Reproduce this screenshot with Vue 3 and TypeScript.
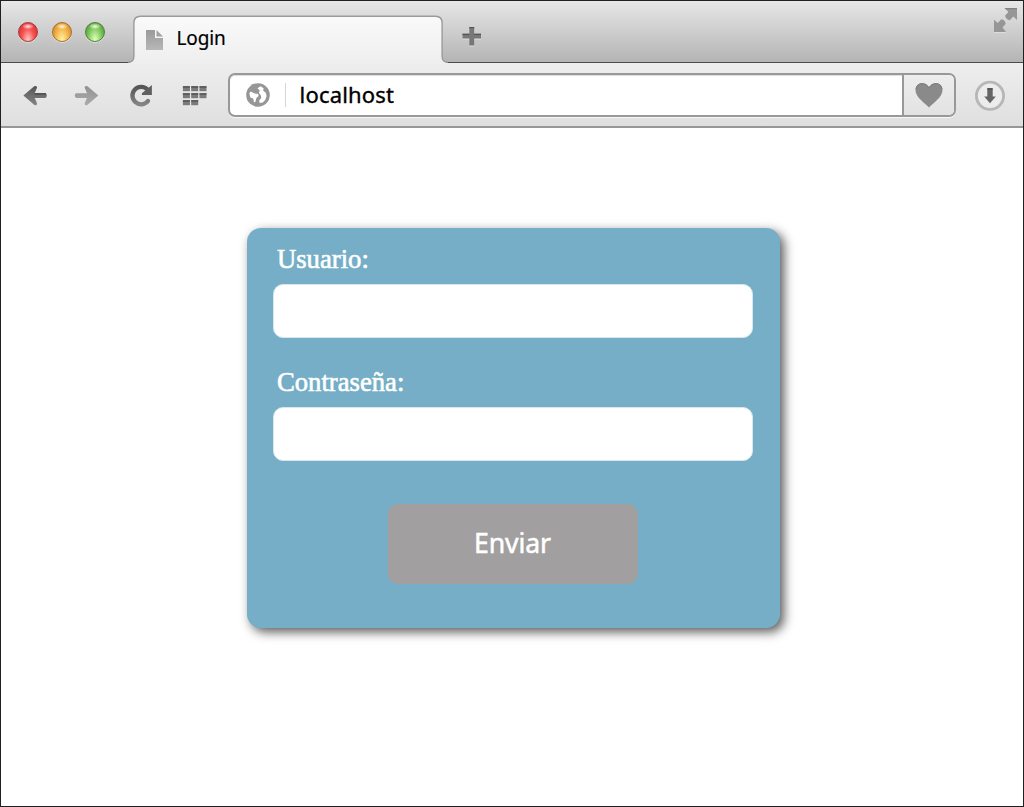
<script setup lang="ts">
import { ref } from 'vue'

const title = 'Login'
const address = ref('localhost')
const user = ref('')
const password = ref('')
const lights = ['red', 'amber', 'green']
const tiles = [
  [0, 0], [8.3, 0], [16.6, 0],
  [0, 7], [8.3, 7], [16.6, 7],
  [0, 14], [8.3, 14],
]
</script>

<template>
  <div class="window">
    <header class="titlebar">
      <div class="lights">
        <span v-for="c in lights" :key="c" class="light" :class="c"></span>
      </div>
      <div class="tab">
        <svg class="tab-shape" width="320" height="50" viewBox="0 0 320 50">
          <defs>
            <linearGradient id="tabFill" x1="0" y1="0" x2="0" y2="1">
              <stop offset="0" stop-color="#fafafa" />
              <stop offset="1" stop-color="#eeeeee" />
            </linearGradient>
          </defs>
          <path d="M1.5 50V48.3Q6 47.5 6 42.5V9Q6 2.5 12.5 2.5H307.5Q314 2.5 314 9V42.5Q314 47.5 318.5 48.3V50Z" fill="url(#tabFill)" />
          <path d="M0 48.3Q5.9 48.3 5.9 42.5V9Q5.9 2.3 12.5 2.3H307.5Q314.1 2.3 314.1 9V42.5Q314.1 48.3 320 48.3" fill="none" stroke="#9b9b9b" stroke-width="1.4" />
        </svg>
        <svg class="page-icon" width="18" height="21" viewBox="0 0 18 21">
          <defs>
            <linearGradient id="pageFill" x1="0" y1="0" x2="0" y2="1">
              <stop offset="0" stop-color="#9a9a9a" />
              <stop offset="1" stop-color="#b8b8b8" />
            </linearGradient>
          </defs>
          <path d="M0 0H9V8H17V20H0Z" fill="url(#pageFill)" />
          <path d="M10.5 0L17 6.5H10.5Z" fill="#a2a2a2" />
        </svg>
        <span class="tab-title">{{ title }}</span>
      </div>
      <svg class="plus" width="20" height="21" viewBox="0 0 20 21">
        <path d="M7.3 1H12.2V7.8H19V12.6H12.2V19.5H7.3V12.6H.5V7.8H7.3Z" fill="#dedede" />
        <path d="M7.3 0H12.2V6.8H19V11.6H12.2V18.5H7.3V11.6H.5V6.8H7.3Z" fill="#777" />
        <path d="M7.3 .6H12.2M.5 7.4H7.3M12.2 7.4H19" stroke="#555" stroke-width="1.4" />
      </svg>
      <svg class="expand" width="26" height="26" viewBox="0 0 26 26">
        <path d="M11.5 0H24V12L20.4 8.6L16.8 12.2Q13 11.8 12 7.8L15.4 4Z" fill="#969696" />
        <path d="M1 11.7L4.7 15L8.4 11.3Q12.2 12 12.7 15.7L9.5 19.6L13 24H1Z" fill="#969696" />
        <path d="M12 .6H24" stroke="#818181" />
        <path d="M1 24.6H13" stroke="#dedede" />
      </svg>
    </header>

    <nav class="toolbar">
      <svg class="tools" width="200" height="40" viewBox="0 0 200 40">
        <defs>
          <linearGradient id="glyph" x1="0" y1="0" x2="0" y2="1">
            <stop offset="0" stop-color="#555" />
            <stop offset="1" stop-color="#858585" />
          </linearGradient>
          <linearGradient id="pale" x1="0" y1="0" x2="0" y2="1">
            <stop offset="0" stop-color="#929292" />
            <stop offset="1" stop-color="#ababab" />
          </linearGradient>
        </defs>
        <path d="M.4 17.6L11.2 8.3Q14.4 7.4 14 9.7L11.7 15.2H22.2Q23.8 15.2 23.8 17.6T22.2 20H11.7L14 25.3Q14.2 28 11.4 26.9Z" fill="url(#glyph)" />
        <path d="M11.7 15.9H23" stroke="#484848" stroke-width="1.4" />
        <path d="M75.3 17.6L64.5 8.3Q61.3 7.4 61.7 9.7L64 15.2H53.4Q51.8 15.2 51.8 17.6T53.4 20H64L61.7 25.3Q61.5 28 64.3 26.9Z" fill="url(#pale)" />
        <path d="M124.6 11.8A8.7 8.7 0 1 0 125 23" fill="none" stroke="url(#glyph)" stroke-width="4.3" stroke-linecap="round" />
        <path d="M128.9 7V17H118.9V15.2Z" fill="#606060" />
        <g v-for="([x, y], i) in tiles" :key="i">
          <rect :x="159.9 + x" :y="8.2 + y" width="7" height="5" fill="#7b7b7b" />
          <rect :x="159.9 + x" :y="8.2 + y" width="7" height="1.5" fill="#555" />
        </g>
      </svg>

      <div class="address">
        <svg class="globe" width="24" height="24" viewBox="0 0 24 24">
          <circle cx="12" cy="12" r="11.8" fill="#969696" />
          <path d="M3.3 10.2L4.6 8.6L7.2 9.8L8.7 10.4L12.2 11L12.6 13L10.4 15L9.4 18.7L8 19.4L7.2 15.4L4.4 14.4Z" fill="#fff" />
          <path d="M11.5 5.2L14.5 3.3L17.6 5.3L17.2 7.7L19.8 9.7L20.6 13L19.2 17L16.7 19.5L13.6 20L13.2 17.5L15.3 14.8L14.7 12L12.8 9.7L13.8 7.5Z" fill="#fff" />
        </svg>
        <span class="divider"></span>
        <span class="url">{{ address }}</span>
        <div class="favorite">
          <svg width="28" height="25" viewBox="0 0 28 25">
            <path d="M14 24.5C10 20 .5 14.5 .5 7.3C.5 -1 10.8 -2 14 4.6C17.2 -2 27.5 -1 27.5 7.3C27.5 14.5 18 20 14 24.5Z" fill="#8a8a8a" />
            <path d="M1 6C1.5 -.8 11 -1.2 14 4.8C17 -1.2 26.5 -.8 27 6" fill="none" stroke="#7b7b7b" />
          </svg>
        </div>
      </div>

      <svg class="download" width="32" height="32" viewBox="0 0 32 32">
        <circle cx="16" cy="15.8" r="13.6" fill="#ececec" stroke="#b7b7b7" stroke-width="2.8" />
        <path d="M13.3 8.3H18.7V16.6H21.8L16 23.2L10.2 16.6H13.3Z" fill="#656565" />
        <path d="M13.3 8.9H18.7" stroke="#444" stroke-width="1.2" />
      </svg>
    </nav>

    <main class="page">
      <form class="card" @submit.prevent>
        <label for="user">Usuario:</label>
        <input id="user" v-model="user" type="text" />
        <label for="password">Contraseña:</label>
        <input id="password" v-model="password" type="password" />
        <button type="submit">Enviar</button>
      </form>
    </main>
  </div>
</template>

<style>
body {
  margin: 0;
}
</style>

<style scoped>
.window {
  box-sizing: border-box;
  width: 1024px;
  height: 807px;
  border: 1px solid #231f20;
  background: #fff;
  overflow: hidden;
  display: flex;
  flex-direction: column;
  font-family: "Noto Sans", "Open Sans", sans-serif;
}

.titlebar {
  box-sizing: border-box;
  height: 62px;
  flex: none;
  display: flex;
  align-items: flex-start;
  background: linear-gradient(#e7e7e7, #b4b4b4);
  border-bottom: 1.5px solid #4c4c4c;
}

.lights {
  display: flex;
  gap: 13.5px;
  padding: 20.5px 0 0 17px;
  width: 110px;
}

.light {
  box-sizing: border-box;
  width: 20px;
  height: 20px;
  border-radius: 50%;
  border: 1px solid;
  box-shadow: 0 1px 0 #e2e2e2;
}

.red {
  border-color: #a33c3b;
  background: radial-gradient(ellipse 6px 3px at 50% 19%, #ffe4e2, transparent), radial-gradient(ellipse at 50% 95%, #ffc0b8 5%, #f9504f 50%, #d83437 85%);
}

.amber {
  border-color: #a9712d;
  background: radial-gradient(ellipse 6px 3px at 50% 19%, #fff4dc, transparent), radial-gradient(ellipse at 50% 95%, #ffeea3 5%, #f6b64a 50%, #d78b2c 85%);
}

.green {
  border-color: #4d8238;
  background: radial-gradient(ellipse 6px 3px at 50% 19%, #f0ffe8, transparent), radial-gradient(ellipse at 50% 95%, #d9ffb5 5%, #85cc63 50%, #5a9d40 85%);
}

.tab {
  position: relative;
  width: 320px;
  height: 50px;
  margin-top: 13px;
  flex: none;
  display: flex;
  align-items: flex-start;
}

.tab-shape {
  position: absolute;
  left: 0;
  top: 0;
}

.page-icon {
  position: relative;
  margin: 16px 0 0 18.3px;
}

.tab-title {
  position: relative;
  margin: 10px 0 0 12.2px;
  font-size: 19px;
  line-height: 28px;
  letter-spacing: -0.15px;
  color: #000;
  -webkit-text-stroke: 0.2px #000;
}

.plus {
  margin: 26.4px 0 0 13.5px;
}

.expand {
  margin: 6.5px 4px 0 auto;
}

.toolbar {
  box-sizing: border-box;
  height: 65px;
  flex: none;
  display: flex;
  align-items: flex-start;
  background: linear-gradient(#eeeeee, #dfdfdf);
  border-bottom: 2px solid #979797;
}

.tools {
  margin: 15px 0 0 22px;
  flex: none;
}

.address {
  box-sizing: border-box;
  width: 728px;
  height: 44px;
  margin: 10px 0 0 5px;
  flex: none;
  display: flex;
  align-items: center;
  border: 2px solid #989898;
  border-radius: 7px;
  background: #fff;
  box-shadow: inset 0 1px 1px #ddd, 0 1px 0 #f7f7f7;
  overflow: hidden;
}

.globe {
  margin-left: 16px;
}

.divider {
  width: 1px;
  height: 24px;
  margin-left: 15px;
  background: #d4d4d4;
}

.url {
  margin: 0 0 2px 13.5px;
  font-size: 22px;
  line-height: 30px;
  letter-spacing: 0.2px;
  color: #000;
  -webkit-text-stroke: 0.35px #000;
}

.favorite {
  box-sizing: border-box;
  width: 52px;
  height: 40px;
  margin-left: auto;
  padding-top: 1px;
  display: flex;
  align-items: center;
  justify-content: center;
  border-left: 2px solid #989898;
  background: linear-gradient(#ededed, #e2e2e2);
}

.download {
  margin: 17px 0 0 17.7px;
}

.page {
  flex: 1;
  padding-top: 100px;
}

.card {
  box-sizing: border-box;
  width: 533px;
  height: 399.5px;
  margin-left: 245.5px;
  padding: 13px 27px 0 26.5px;
  display: flex;
  flex-direction: column;
  background: #75aec6;
  border-radius: 14px;
  box-shadow: 4px 4px 11px rgba(0, 0, 0, 0.65);
}

label {
  height: 36px;
  margin-bottom: 7px;
  padding-left: 4px;
  font-family: "Liberation Serif", serif;
  font-size: 26.67px;
  line-height: 36px;
  color: #fff;
  -webkit-text-stroke: 0.6px #fff;
}

input {
  box-sizing: border-box;
  width: 480px;
  height: 54px;
  margin: 0 0 26px;
  padding: 0 12px;
  border: 1px solid #d6e7ee;
  border-radius: 10px;
  background: #fff;
  outline: none;
  font-size: 22px;
}

button {
  width: 250px;
  height: 80px;
  margin: 17px 0 0 115px;
  padding: 0 1px 4px 0;
  border: 0;
  border-radius: 10px;
  background: #a19fa0;
  color: #fff;
  font-family: "Noto Sans", "Open Sans", sans-serif;
  font-size: 26.67px;
  letter-spacing: -0.1px;
  -webkit-text-stroke: 0.5px #fff;
}
</style>
